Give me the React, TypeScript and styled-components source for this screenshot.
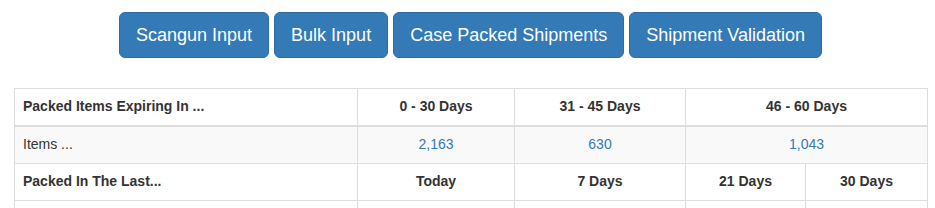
import React from 'react'
import styled, { createGlobalStyle } from 'styled-components';

const GlobalStyle = createGlobalStyle`
  body {
    margin: 0;
    background: #fff;
    font-family: "Liberation Sans", Arial, Helvetica, sans-serif;
    font-size: 14px;
    line-height: 1.42857;
    color: #333;
  }
`

const Page = styled.div`
  padding: 12px 8px 0 14px;
`

const Toolbar = styled.div`
  display: flex;
  justify-content: center;
  gap: 5px;
  margin-bottom: 30px;
`

const Button = styled.button`
  font-family: inherit;
  font-size: 18px;
  line-height: 1.3333333;
  padding: 10px 16px;
  border-radius: 6px;
  color: #fff;
  background-color: #337ab7;
  border: 1px solid #2e6da4;
  cursor: pointer;
`

const Table = styled.table`
  width: 100%;
  table-layout: fixed;
  border-collapse: collapse;
  border-spacing: 0;
  border: 1px solid #ddd;
`

const Row = styled.tr<{ $striped?: boolean }>`
  background: ${p => (p.$striped ? '#f9f9f9' : '#fff')};
`

const Cell = styled.td<{ $head?: boolean; $align?: 'left' | 'center'; $thick?: boolean }>`
  padding: 8px;
  border: 1px solid #ddd;
  border-bottom-width: ${p => (p.$thick ? '2px' : '1px')};
  text-align: ${p => p.$align || 'center'};
  font-weight: ${p => (p.$head ? 700 : 400)};
  vertical-align: middle;
  height: 20px;
  white-space: nowrap;
`

const Count = styled.a`
  color: #337ab7;
  text-decoration: none;
`

const buttons = ['Scangun Input', 'Bulk Input', 'Case Packed Shipments', 'Shipment Validation']

const expiring = [
  { label: '0 - 30 Days', count: '2,163', span: 1 },
  { label: '31 - 45 Days', count: '630', span: 1 },
  { label: '46 - 60 Days', count: '1,043', span: 2 },
]

const packed = ['Today', '7 Days', '21 Days', '30 Days']

export default function App() {
  return (
    <Page>
      <GlobalStyle />
      <Toolbar>
        {buttons.map(b => <Button key={b}>{b}</Button>)}
      </Toolbar>
      <Table>
        <colgroup>
          <col style={{ width: 343 }} />
          <col style={{ width: 157 }} />
          <col style={{ width: 171 }} />
          <col style={{ width: 120 }} />
          <col style={{ width: 122 }} />
        </colgroup>
        <thead>
          <Row>
            <Cell as="th" $head $align="left" $thick>Packed Items Expiring In ...</Cell>
            {expiring.map(e => (
              <Cell as="th" key={e.label} $head $thick colSpan={e.span}>{e.label}</Cell>
            ))}
          </Row>
        </thead>
        <tbody>
          <Row $striped>
            <Cell $align="left">Items ...</Cell>
            {expiring.map(e => (
              <Cell key={e.label} colSpan={e.span}><Count href="#">{e.count}</Count></Cell>
            ))}
          </Row>
          <Row>
            <Cell as="th" $head $align="left">Packed In The Last...</Cell>
            {packed.map(p => <Cell as="th" key={p} $head>{p}</Cell>)}
          </Row>
          <Row $striped={false}>
            <Cell $align="left">&nbsp;</Cell>
            <Cell>&nbsp;</Cell>
            <Cell>&nbsp;</Cell>
            <Cell>&nbsp;</Cell>
            <Cell>&nbsp;</Cell>
          </Row>
        </tbody>
      </Table>
    </Page>
  )
}
